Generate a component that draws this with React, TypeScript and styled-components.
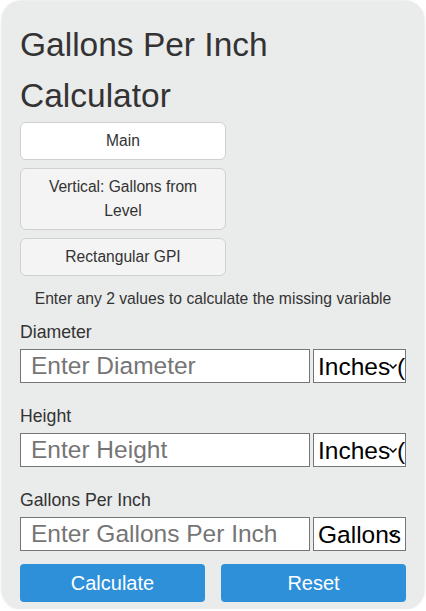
import { useState } from "react";
import styled, { createGlobalStyle } from "styled-components";

const GlobalStyle = createGlobalStyle`
  body {
    margin: 0;
    background: #fff;
    font-family: "Liberation Sans", Arial, sans-serif;
  }
`;

const Card = styled.div`
  margin: 1px 2px 0;
  padding: 18px 18px 7px;
  background: #eaebeb;
  border-radius: 20px;
  box-shadow: 0 0 3px rgba(0, 0, 0, 0.18);
  color: #333;
`;

const Title = styled.h1`
  margin: 0;
  font-size: 33.5px;
  font-weight: normal;
  line-height: 51px;
  color: #333;
`;

const Tabs = styled.div`
  display: flex;
  flex-direction: column;
  gap: 8px;
  width: 206px;
  margin-top: 1px;
`;

const Tab = styled.button<{ $active?: boolean }>`
  padding: 6px 12px;
  font-family: inherit;
  font-size: 15.6px;
  line-height: 24px;
  color: #333;
  background: ${(p) => (p.$active ? "#fff" : "#f4f4f4")};
  border: 1px solid #d0d0d0;
  border-radius: 6px;
  cursor: pointer;
`;

const Info = styled.p`
  margin: 14px 0 14px;
  text-align: center;
  font-size: 15.7px;
  line-height: 18px;
  color: #333;
`;

const Field = styled.div`
  & + & {
    margin-top: 23px;
  }
`;

const Label = styled.label`
  display: block;
  font-size: 17.7px;
  line-height: 20px;
  margin-bottom: 7px;
  color: #333;
`;

const Row = styled.div`
  display: flex;
  gap: 3px;
`;

const Input = styled.input`
  flex: 1;
  min-width: 0;
  height: 34px;
  box-sizing: border-box;
  padding: 0 10px;
  font-family: "Liberation Sans", Arial, sans-serif;
  font-size: 24.5px;
  border: 1px solid #767676;
  border-radius: 0;
  background: #fff;

  &::placeholder {
    color: #757575;
  }
`;

const UnitWrap = styled.div`
  position: relative;
  width: 93px;
`;

const Unit = styled.select`
  appearance: none;
  width: 100%;
  height: 34px;
  box-sizing: border-box;
  padding: 0 0 0 4px;
  font-family: "Liberation Sans", Arial, sans-serif;
  font-size: 24.5px;
  color: #000;
  border: 1px solid #767676;
  border-radius: 0;
  background: #fff;
`;

const Chevron = styled.svg`
  position: absolute;
  right: 9px;
  top: 15px;
  pointer-events: none;
`;

const Buttons = styled.div`
  display: flex;
  gap: 16px;
  margin-top: 13px;
`;

const Action = styled.button`
  flex: 1;
  height: 38px;
  font-family: inherit;
  font-size: 20px;
  color: #fff;
  background: #2d90d9;
  border: none;
  border-radius: 4px;
  cursor: pointer;
`;

const fields = [
  { label: "Diameter", placeholder: "Enter Diameter", units: ["Inches (in)", "Feet (ft)"] },
  { label: "Height", placeholder: "Enter Height", units: ["Inches (in)", "Feet (ft)"] },
  { label: "Gallons Per Inch", placeholder: "Enter Gallons Per Inch", units: ["Gallons (gal)"] },
];

export default function App() {
  const [values, setValues] = useState(["", "", ""]);

  return (
    <>
      <GlobalStyle />
      <Card>
        <Title>Gallons Per Inch Calculator</Title>
        <Tabs>
          <Tab $active>Main</Tab>
          <Tab>Vertical: Gallons from Level</Tab>
          <Tab>Rectangular GPI</Tab>
        </Tabs>
        <Info>Enter any 2 values to calculate the missing variable</Info>
        {fields.map((f, i) => (
          <Field key={f.label}>
            <Label>{f.label}</Label>
            <Row>
              <Input
                type="text"
                placeholder={f.placeholder}
                value={values[i]}
                onChange={(e) => {
                  const next = [...values];
                  next[i] = e.target.value;
                  setValues(next);
                }}
              />
              <UnitWrap>
                <Unit>
                  {f.units.map((u) => (
                    <option key={u}>{u}</option>
                  ))}
                </Unit>
                <Chevron width="8" height="5" viewBox="0 0 8 5">
                  <path d="M0.5 0.5 L4 4 L7.5 0.5" fill="none" stroke="#000" strokeWidth="1.5" />
                </Chevron>
              </UnitWrap>
            </Row>
          </Field>
        ))}
        <Buttons>
          <Action>Calculate</Action>
          <Action onClick={() => setValues(["", "", ""])}>Reset</Action>
        </Buttons>
      </Card>
    </>
  );
}
